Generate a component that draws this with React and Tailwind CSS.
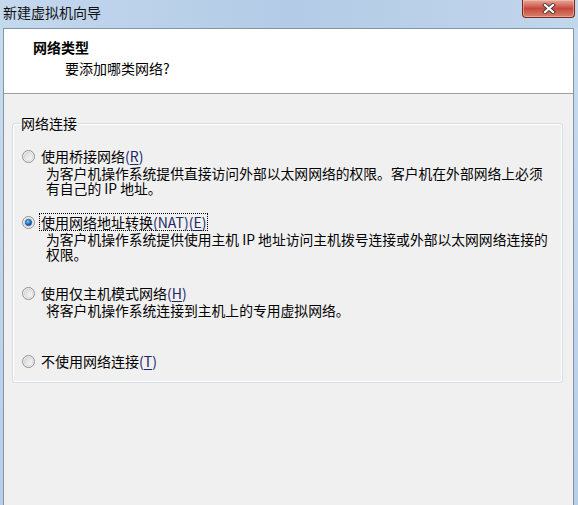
import React from 'react';

const cjk = { fontFamily: '"Noto Sans CJK SC", "Noto Sans", sans-serif' };

function Radio({ checked }) {
  return (
    <svg width="13" height="13" viewBox="0 0 13 13" className="shrink-0">
      <defs>
        <linearGradient id="radioFace" x1="0" y1="0" x2="1" y2="1">
          <stop offset="0" stopColor="#d6d6d6" />
          <stop offset="1" stopColor="#fbfbfb" />
        </linearGradient>
        <radialGradient id="radioDot" cx="0.4" cy="0.35" r="0.7">
          <stop offset="0" stopColor="#8fd0ff" />
          <stop offset="0.45" stopColor="#2a7fd0" />
          <stop offset="1" stopColor="#0b3d7c" />
        </radialGradient>
      </defs>
      <circle cx="6.5" cy="6.5" r="6" fill="#f3f3f3" stroke="#8e8f8f" />
      <circle cx="6.5" cy="6.5" r="4.3" fill="url(#radioFace)" stroke="#cfcfcf" strokeWidth="0.7" />
      {checked && <circle cx="6.5" cy="6.5" r="3.2" fill="url(#radioDot)" stroke="#1b4f8f" strokeWidth="0.6" />}
    </svg>
  );
}

function Option({ label, keyChar, tail, focused, checked, lines, className }) {
  return (
    <div className={className}>
      <div className="flex h-[18px] items-center">
        <div className="ml-[9px] flex w-[13px] items-center">
          <Radio checked={checked} />
        </div>
        <span
          className={`ml-[4px] flex h-[18px] items-center whitespace-nowrap border px-[1px] text-[14px] leading-[16px] text-black ${focused ? 'border-dotted border-black' : 'border-transparent'}`}
        >
          {label}
          <span className="text-[#1d2766]">
            {tail}(<span className="underline underline-offset-2">{keyChar}</span>)
          </span>
        </span>
      </div>
      {lines.length > 0 && (
        <div className="mt-[1px] pl-[33px] text-[13.8px] leading-[15px] text-black">
          {lines.map((line) => (
            <div key={line} className="whitespace-nowrap">{line}</div>
          ))}
        </div>
      )}
    </div>
  );
}

export default function App() {
  return (
    <div className="flex h-[505px] w-[578px] flex-col overflow-hidden bg-gradient-to-b from-[#c8dbf0] to-[#b8cfe8]" style={cjk}>
      {/* title bar */}
      <div className="flex h-[28px] shrink-0 items-start bg-gradient-to-r from-[#c4d8ee] via-[#b3cbe6] to-[#c2d6ec]">
        <span className="pl-[3px] pt-[4px] text-[14px] leading-[16px] text-[#111]">新建虚拟机向导</span>
        <button className="ml-auto mr-[3px] flex h-[18px] w-[53px] items-center justify-center rounded-b-[4px] border border-t-0 border-[#7b2a22] bg-gradient-to-b from-[#e6a89a] via-[#c8473b] to-[#d5806c] shadow-[inset_0_0_0_1px_rgba(255,210,200,0.45)]">
          <svg width="14" height="11" viewBox="0 0 14 11">
            <path d="M3 2 L11 9 M11 2 L3 9" stroke="#4a3a38" strokeWidth="4" strokeLinecap="square" />
            <path d="M3 2 L11 9 M11 2 L3 9" stroke="#ffffff" strokeWidth="2.2" strokeLinecap="square" />
          </svg>
        </button>
      </div>

      {/* client area */}
      <div className="ml-[3px] flex w-[571px] flex-1 flex-col border-x border-t border-x-[#8394ab] border-t-[#8394ab] bg-[#f0f0f0]">
        <div className="h-[65px] shrink-0 border-b border-[#a0a0a0] bg-white pt-[9px]">
          <div className="ml-[29px] text-[14px] font-bold leading-[18px] text-black">网络类型</div>
          <div className="ml-[61px] mt-[3px] text-[14px] leading-[18px] text-black">要添加哪类网络?</div>
        </div>

        <fieldset className="ml-[8px] mt-[21px] w-[551px] rounded-[3px] border border-[#d2dde6] pb-[12px] shadow-[inset_0_0_0_1px_#ffffff]">
          <legend className="ml-[7px] px-[1px] text-[14px] leading-[16px] text-black">网络连接</legend>
          <div className="pt-[16px]">
            <Option
              label="使用桥接网络"
              keyChar="R"
              lines={['为客户机操作系统提供直接访问外部以太网网络的权限。客户机在外部网络上必须', '有自己的 IP 地址。']}
            />
            <Option
              className="mt-[17px]"
              label="使用网络地址转换"
              tail="(NAT)"
              keyChar="E"
              checked
              focused
              lines={['为客户机操作系统提供使用主机 IP 地址访问主机拨号连接或外部以太网网络连接的', '权限。']}
            />
            <Option
              className="mt-[22px]"
              label="使用仅主机模式网络"
              keyChar="H"
              lines={['将客户机操作系统连接到主机上的专用虚拟网络。']}
            />
            <Option className="mt-[34px]" label="不使用网络连接" keyChar="T" lines={[]} />
          </div>
        </fieldset>
      </div>
    </div>
  );
}
